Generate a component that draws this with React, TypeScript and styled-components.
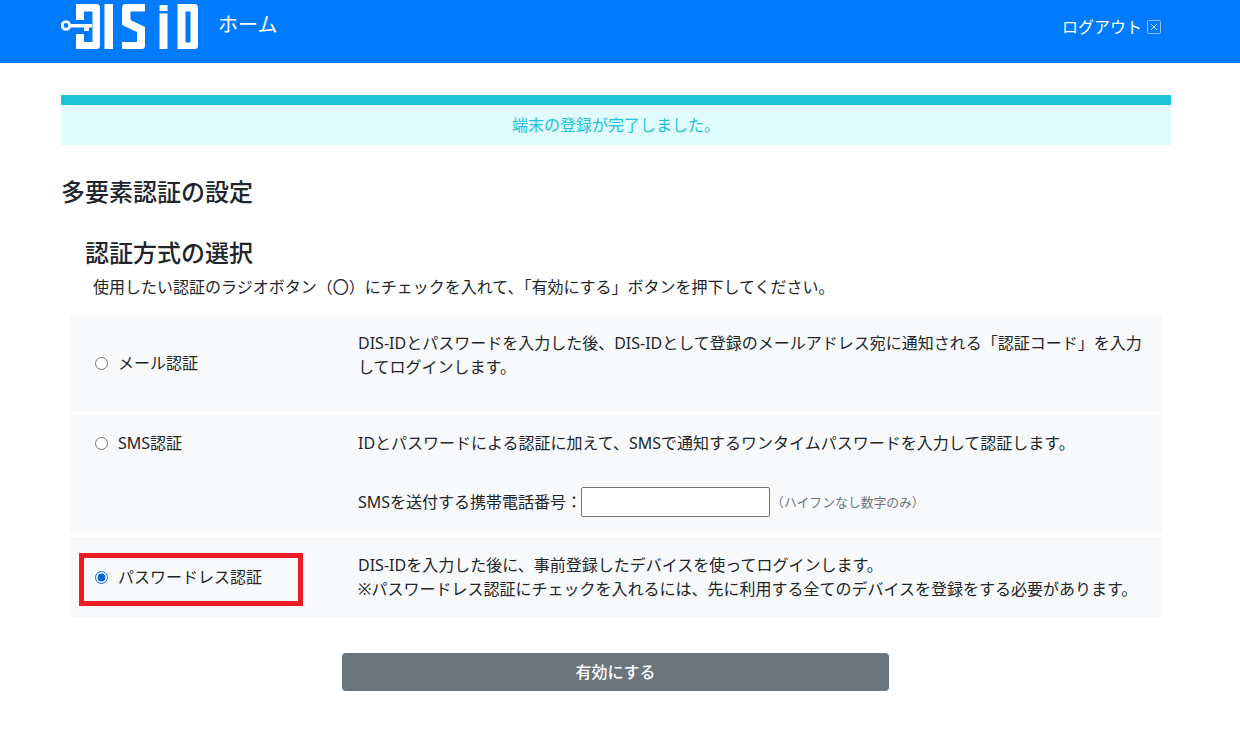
import React from "react";
import styled, { createGlobalStyle } from "styled-components";

const Global = createGlobalStyle`
  html, body { margin: 0; padding: 0; background: #fff; }
  body { font-family: "Noto Sans", "Noto Sans CJK JP", sans-serif; color: #212529; font-size: 16px; }
`;
const Header = styled.header`
  height: 63px; background: #007bff; display: flex; align-items: flex-start; padding: 0 79px 0 61px; color: #fff;
`;
const Logo = styled.svg`display: block; width: 138px; height: 50px; flex: none;`;
const HomeLink = styled.a`font-size: 20px; line-height: 26px; margin: 12px 0 0 19px; color: #fff;`;
const Logout = styled.a`margin: 15px 0 0 auto; display: flex; align-items: center; gap: 5px; font-size: 16px; line-height: 24px; color: #fff;`;
const Main = styled.main`padding: 32px 69px 0 61px;`;
const Alert = styled.div`
  height: 38px; padding-bottom: 2px; border-top: 10px solid #1cc4d6; background: #e0fcff; color: #1cc1d6;
  display: flex; align-items: center; justify-content: center; font-size: 16px;
`;
const Title = styled.h1`font-size: 24px; line-height: 32px; font-weight: 500; margin: 31px 0 0; color: #212529;`;
const SubTitle = styled.h2`font-size: 24px; line-height: 32px; font-weight: 500; margin: 29px 0 0 24px;`;
const Lead = styled.p`margin: 6px 0 0 32px; font-size: 16px; line-height: 24px;`;
const Rows = styled.div`margin: 16px 9px 0; display: flex; flex-direction: column; gap: 4px;`;
const Row = styled.div<{ $h: number }>`
  height: ${p => p.$h}px; background: #f8f9fa; display: grid; grid-template-columns: 288px 1fr; box-sizing: border-box; padding-right: 20px;
`;
const Opt = styled.label<{ $top: number }>`
  display: flex; align-items: center; gap: 10px; margin-top: ${p => p.$top}px; padding-left: 25px; height: 24px; font-size: 16px; line-height: 24px;
`;
const Desc = styled.div`padding-top: 16px; font-size: 16px; line-height: 24px;`;
const Radio = styled.input.attrs({ type: "radio" })`width: 13px; height: 13px; margin: 0; accent-color: #0a66d8; flex: none;`;
const Highlight = styled.div`
  position: absolute; left: 79px; top: 553px; width: 224px; height: 53px; box-sizing: border-box; border: 5px solid #ed1c24; pointer-events: none;
`;
const Phone = styled.div`display: flex; align-items: center; margin-top: 32px; height: 30px;`;
const PhoneInput = styled.input`
  width: 189px; height: 30px; box-sizing: border-box; margin-left: -1px; border: 1px solid #767676; border-radius: 2px; background: #fff;
`;
const Hint = styled.small`font-size: 12.8px; color: #6c757d; margin-left: 1px;`;
const Submit = styled.button`
  display: block; margin: 36px 0 0 281px; width: 547px; height: 38px; padding: 0 0 2px; border: 0; border-radius: 4px; background: #6c757d; color: #fff;
  font: 500 16px "Noto Sans", "Noto Sans CJK JP", sans-serif;
`;

export default function App() {
  return (
    <>
      <Global />
      <Header>
        <Logo viewBox="61 0 138 50" fill="#fff">
          <circle cx="66" cy="25.500" r="3.800" fill="none" stroke="#fff" strokeWidth="2.800" />
          <path d="M70 24h22v3.500h-3v3.500h-5v-3.500H70z" />
          <path d="M76 4h20.500a3.500 3.500 0 0 1 3.500 3.500v38a3.500 3.500 0 0 1-3.500 3.500H76V34h8v8h8.500V11.500H84V20h-8z" />
          <rect x="104.500" y="4" width="8.500" height="45" />
          <path d="M125.500 4H145v7.500h-14.500v8.500l14.500 7v18.500a3.500 3.500 0 0 1-3.500 3.500H122v-7h15V32l-15-7V7.500A3.500 3.500 0 0 1 125.500 4z" />
          <rect x="159.500" y="5" width="8" height="6" />
          <rect x="159.500" y="13.500" width="8" height="35.500" />
          <path fillRule="evenodd" d="M177.500 4h17a3.500 3.500 0 0 1 3.500 3.500v38a3.500 3.500 0 0 1-3.500 3.500h-17zM185.500 11.500v31h5v-31z" />
        </Logo>
        <HomeLink>ホーム</HomeLink>
        <Logout>
          ログアウト
          <svg width="14" height="14" viewBox="0 0 14 14" fill="none" stroke="#cfe4ff">
            <rect x="0.5" y="0.5" width="13" height="13" rx="1" stroke="#8fc2ff" />
            <path d="M4 4l6 6M10 4l-6 6" />
          </svg>
        </Logout>
      </Header>
      <Main>
        <Alert>端末の登録が完了しました。</Alert>
        <Title>多要素認証の設定</Title>
        <SubTitle>認証方式の選択</SubTitle>
        <Lead>使用したい認証のラジオボタン（〇）にチェックを入れて、「有効にする」ボタンを押下してください。</Lead>
        <Rows>
          <Row $h={96}>
            <Opt $top={36}><Radio name="m" />メール認証</Opt>
            <Desc>DIS-IDとパスワードを入力した後、DIS-IDとして登録のメールアドレス宛に通知される「認証コード」を入力してログインします。</Desc>
          </Row>
          <Row $h={118}>
            <Opt $top={16}><Radio name="m" />SMS認証</Opt>
            <Desc>
              IDとパスワードによる認証に加えて、SMSで通知するワンタイムパスワードを入力して認証します。
              <Phone>SMSを送付する携帯電話番号：<PhoneInput /><Hint>（ハイフンなし数字のみ）</Hint></Phone>
            </Desc>
          </Row>
          <Row $h={80}>
            <Opt $top={28}><Radio name="m" defaultChecked />パスワードレス認証</Opt>
            <Desc>DIS-IDを入力した後に、事前登録したデバイスを使ってログインします。<br />※パスワードレス認証にチェックを入れるには、先に利用する全てのデバイスを登録をする必要があります。</Desc>
          </Row>
        </Rows>
        <Submit>有効にする</Submit>
      </Main>
      <Highlight />
    </>
  );
}
